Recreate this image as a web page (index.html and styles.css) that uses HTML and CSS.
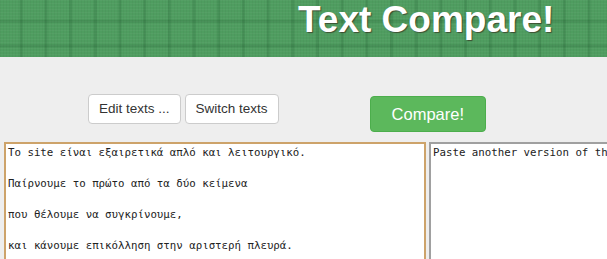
FILE: index.html
```html
<!DOCTYPE html>
<html lang="el">

<head>
    <meta charset="UTF-8">
    <meta name="viewport" content="width=device-width, initial-scale=1.0">
    <title>Text Compare!</title>
    <link rel="stylesheet" href="styles.css">
</head>

<body>

    <div class="header">
        <h1 class="title">Text Compare!</h1>
    </div>

    <div class="toolbar">
        <div class="btn-group">
            <button class="btn">Edit texts ...</button>
            <button class="btn">Switch texts</button>
        </div>
        <button class="btn btn-compare">Compare!</button>
    </div>

    <div class="editors">
        <textarea class="text-box text-box-active" spellcheck="false">Το site είναι εξαιρετικά απλό και λειτουργικό.

Παίρνουμε το πρώτο από τα δύο κείμενα

που θέλουμε να συγκρίνουμε,

και κάνουμε επικόλληση στην αριστερή πλευρά.</textarea>
        <textarea class="text-box" spellcheck="false">Paste another version of the text here.</textarea>
    </div>

</body>

</html>
```

FILE: styles.css
```css
body {
    font-family: "Liberation Sans", Arial, sans-serif;
    background-color: #eee;
    color: #333;
    margin: 0;
    overflow: hidden;
}

.header {
    height: 57px;
    overflow: hidden;
    background-color: #4f9d60;
    background-image:
        linear-gradient(90deg, transparent 20px, rgba(0, 50, 15, 0.13) 20px, rgba(0, 50, 15, 0.13) 23px, transparent 23px),
        linear-gradient(180deg, transparent 20px, rgba(0, 50, 15, 0.13) 20px, rgba(0, 50, 15, 0.13) 23px, transparent 23px),
        repeating-linear-gradient(180deg, rgba(255, 255, 255, 0.03) 0 1px, transparent 1px 3px),
        repeating-linear-gradient(90deg, rgba(0, 0, 0, 0.03) 0 1px, transparent 1px 3px);
    background-size: 24.7px 24.7px, 24.7px 24.7px, auto, auto;
}

.title {
    margin: 0;
    padding-top: 1px;
    padding-left: 298px;
    font-size: 37px;
    line-height: 37px;
    font-weight: bold;
    color: #fff;
    text-shadow: 1px 1px 1px rgba(50, 30, 20, 0.6);
}

.toolbar {
    display: flex;
    align-items: flex-start;
    margin-top: 37px;
    padding-left: 88px;
}

.btn-group {
    display: flex;
    gap: 4px;
}

.btn {
    font-family: "Liberation Sans", Arial, sans-serif;
    font-size: 13.5px;
    line-height: 20px;
    color: #333;
    background-color: #fff;
    border: 1px solid #ccc;
    border-radius: 4px;
    padding: 4px 10px;
    cursor: pointer;
}

.btn-compare {
    margin-top: 2px;
    margin-left: 91px;
    font-size: 16.5px;
    line-height: 22px;
    padding: 6px 21px;
    color: #fff;
    background-color: #5cb85c;
    border-color: #4cae4c;
}

.editors {
    display: flex;
    gap: 3px;
    margin-top: 10px;
    padding-left: 4px;
}

.text-box {
    flex: none;
    width: 422px;
    height: 200px;
    box-sizing: border-box;
    margin: 0;
    padding: 1px 2px;
    font-family: "DejaVu Sans Mono", monospace;
    font-size: 10.75px;
    line-height: 15.5px;
    color: #222;
    background-color: #fff;
    border: 2px solid #a0a0a0;
    border-right-color: #d8d8d8;
    border-bottom-color: #d8d8d8;
    resize: none;
    outline: none;
}

.text-box-active {
    border-color: #cda36a;
}
```
